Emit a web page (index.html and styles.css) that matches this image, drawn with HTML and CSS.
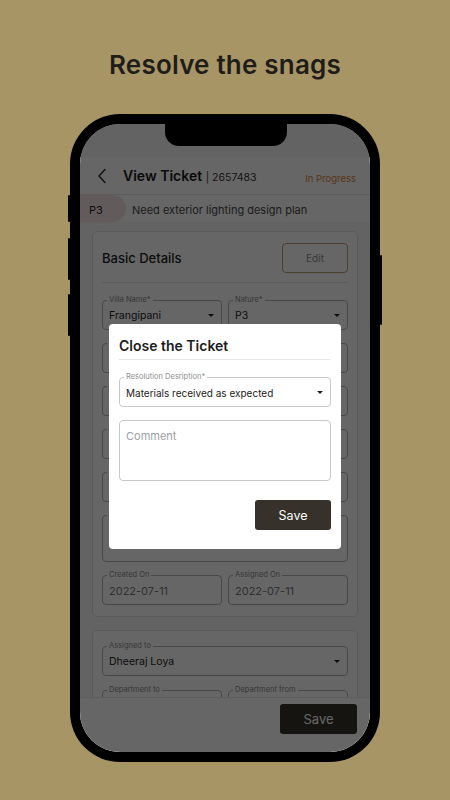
FILE: index.html
```html
<!DOCTYPE html>
<html lang="en">
<head>
<meta charset="utf-8">
<title>Resolve the snags</title>
<link rel="stylesheet" href="styles.css">
</head>
<body>
<main class="page">
  <h1 class="headline">Resolve the snags</h1>
  <div class="phone">
    <span class="side-btn side-l1"></span>
    <span class="side-btn side-l2"></span>
    <span class="side-btn side-l3"></span>
    <span class="side-btn side-r1"></span>
    <div class="screen">
      <div class="notch"></div>
      <header class="topbar">
        <svg class="back" width="10" height="16" viewBox="0 0 10 16"><path d="M8 1.5 L2 8 L8 14.5" fill="none" stroke="#2a2a2a" stroke-width="1.4" stroke-linecap="round" stroke-linejoin="round"/></svg>
        <h2 class="title">View Ticket <span class="ticket-id">| 2657483</span></h2>
        <span class="status">In Progress</span>
      </header>
      <div class="subject">
        <span class="prio">P3</span>
        <span class="subject-text">Need exterior lighting design plan</span>
      </div>

      <section class="card">
        <div class="card-head">
          <h3 class="card-title">Basic Details</h3>
          <button class="edit-btn">Edit</button>
        </div>
        <div class="fields">
          <div class="row">
            <div class="field"><span class="field-label">Villa Name*</span><span class="value">Frangipani</span><span class="caret"></span></div>
            <div class="field"><span class="field-label">Nature*</span><span class="value">P3</span><span class="caret"></span></div>
          </div>
          <div class="field"><span class="field-label">Category*</span><span class="value">Villa Exterior</span><span class="caret"></span></div>
          <div class="field"><span class="field-label">Sub Category*</span><span class="value">Outdoor Lighting</span><span class="caret"></span></div>
          <div class="field"><span class="field-label">Location*</span><span class="value">Garden Area</span><span class="caret"></span></div>
          <div class="field"><span class="field-label">Raised By</span><span class="value"></span></div>
          <div class="field field-tall"><span class="field-label">Description</span><span class="value"></span></div>
          <div class="row">
            <div class="field field-muted"><span class="field-label">Created On</span><span class="value">2022-07-11</span></div>
            <div class="field field-muted"><span class="field-label">Assigned On</span><span class="value">2022-07-11</span></div>
          </div>
        </div>
      </section>

      <section class="card card-assign">
        <div class="fields fields-tight">
          <div class="field"><span class="field-label">Assigned to</span><span class="value">Dheeraj Loya</span><span class="caret"></span></div>
          <div class="row">
            <div class="field"><span class="field-label">Department to</span><span class="value"></span></div>
            <div class="field"><span class="field-label">Department from</span><span class="value"></span></div>
          </div>
        </div>
      </section>

      <footer class="bottombar">
        <button class="save-btn">Save</button>
      </footer>

      <div class="scrim"></div>

      <div class="modal">
        <h3 class="modal-title">Close the Ticket</h3>
        <div class="field modal-field"><span class="field-label">Resolution Desription*</span><span class="value">Materials received as expected</span><span class="caret"></span></div>
        <div class="comment">Comment</div>
        <div class="modal-actions">
          <button class="modal-save">Save</button>
        </div>
      </div>
    </div>
  </div>
</main>
</body>
</html>
```

FILE: styles.css
```css
* { box-sizing: border-box; }

body {
  margin: 0;
  background: #a89566;
  font-family: Inter, "Noto Sans", "Liberation Sans", sans-serif;
}

.page {
  width: 450px;
  height: 800px;
  display: flex;
  flex-direction: column;
  align-items: center;
  overflow: hidden;
}

.headline {
  margin: 50px 0 0;
  font-size: 26px;
  line-height: 30px;
  font-weight: 600;
  color: #1f1d19;
  letter-spacing: 0.2px;
}

.phone {
  position: relative;
  margin-top: 34px;
  width: 310px;
  height: 648px;
  padding: 10px;
  background: #000;
  border-radius: 50px;
}

.side-btn {
  position: absolute;
  width: 2px;
  background: #000;
  border-radius: 1px;
}
.side-l1 { left: -2px; top: 81px; height: 27px; }
.side-l2 { left: -2px; top: 124px; height: 42px; }
.side-l3 { left: -2px; top: 180px; height: 42px; }
.side-r1 { right: -2px; top: 141px; height: 70px; }

.screen {
  position: relative;
  height: 100%;
  border-radius: 40px;
  overflow: hidden;
  background: #f8f8f8;
  padding-top: 33px;
}

.notch {
  position: absolute;
  top: 0;
  left: 85px;
  width: 122px;
  height: 22px;
  background: #000;
  border-radius: 0 0 14px 14px;
  z-index: 5;
}

.topbar {
  display: flex;
  align-items: center;
  height: 38px;
  padding: 0 14px 0 17px;
  border-bottom: 1px solid #e9e9e9;
  background: #fff;
}

.back { flex: none; }

.title {
  margin: 0 0 0 16px;
  font-size: 14px;
  font-weight: 600;
  color: #1a1a1a;
  white-space: nowrap;
}

.ticket-id {
  font-size: 10.5px;
  font-weight: 400;
  color: #333;
}

.status {
  margin-left: auto;
  padding-top: 5px;
  font-size: 9.5px;
  color: #dc8636;
}

.subject {
  display: flex;
  align-items: center;
  height: 27px;
  padding-top: 2px;
  background: #fff;
}

.prio {
  display: flex;
  align-items: center;
  width: 46px;
  height: 27px;
  margin-top: -2px;
  padding: 2px 0 0 9px;
  background: #f6e3e3;
  border-radius: 0 14px 14px 0;
  font-size: 11px;
  color: #1a1a1a;
}

.subject-text {
  margin-left: 6px;
  font-size: 11px;
  color: #4a4a4a;
}

.card {
  margin: 9px 12px 0;
  background: #fff;
  border: 1px solid #e2e2e2;
  border-radius: 5px;
  padding: 11px 9px 11px;
}

.card-head {
  display: flex;
  align-items: center;
  justify-content: space-between;
  height: 40px;
  padding-bottom: 10px;
  border-bottom: 1px solid #e6e6e6;
}

.card-title {
  margin: 0;
  font-size: 13px;
  font-weight: 500;
  color: #1e1e1e;
}

.edit-btn {
  width: 66px;
  height: 30px;
  background: transparent;
  border: 1px solid #b69f6e;
  border-radius: 4px;
  font-family: inherit;
  font-size: 10px;
  color: #8c8c8c;
}

.fields {
  display: flex;
  flex-direction: column;
  gap: 13px;
  margin-top: 17px;
}

.fields-tight {
  margin-top: 4px;
  gap: 14px;
}

.row {
  display: flex;
  gap: 6px;
}
.row .field { flex: 1; }

.field {
  position: relative;
  display: flex;
  align-items: center;
  height: 30px;
  padding: 1px 7px 0 6px;
  border: 1px solid #b4b4b4;
  border-radius: 4px;
  font-size: 10.5px;
  color: #1e1e1e;
}

.field-tall {
  height: 47px;
  align-items: flex-start;
}

.field-muted { color: #7a7a7a; font-size: 11px; }

.field-label {
  position: absolute;
  top: -6px;
  left: 4px;
  padding: 0 2px;
  background: #fff;
  font-size: 7.5px;
  line-height: 10px;
  color: #8a8a8a;
  white-space: nowrap;
}

.value { white-space: nowrap; }

.caret {
  margin-left: auto;
  width: 0;
  height: 0;
  border-left: 3px solid transparent;
  border-right: 3px solid transparent;
  border-top: 3.5px solid #222;
}

.card-assign {
  margin-top: 13px;
  padding-top: 11px;
}

.bottombar {
  position: absolute;
  left: 0;
  right: 0;
  bottom: 0;
  height: 55px;
  display: flex;
  justify-content: flex-end;
  align-items: flex-start;
  padding: 6px 13px 0;
  background: #fff;
  border-top: 1px solid #ececec;
}

.save-btn {
  width: 77px;
  height: 30px;
  border: none;
  border-radius: 3px;
  background: #36322b;
  color: #fff;
  font-family: inherit;
  font-size: 13px;
}

.scrim {
  position: absolute;
  inset: 0;
  background: rgba(0, 0, 0, 0.6);
  z-index: 3;
}

.modal {
  position: absolute;
  left: 29px;
  top: 200px;
  width: 232px;
  height: 225px;
  padding: 13px 10px 19px;
  background: #fff;
  border-radius: 4px;
  z-index: 4;
}

.modal-title {
  margin: 0;
  padding-bottom: 4px;
  font-size: 14px;
  line-height: 18px;
  font-weight: 600;
  color: #1c1c1c;
  border-bottom: 1px solid #e6e6e6;
}

.modal-field {
  margin-top: 17px;
  border-color: #c9c9c9;
  font-size: 10px;
  color: #222;
}

.modal-field .field-label { color: #8d8d8d; }

.comment {
  margin-top: 13px;
  height: 61px;
  padding: 8px 6px;
  border: 1px solid #c9c9c9;
  border-radius: 4px;
  font-size: 11px;
  color: #9aa0a8;
}

.modal-actions {
  display: flex;
  justify-content: flex-end;
  margin-top: 19px;
}

.modal-save {
  width: 76px;
  height: 30px;
  border: none;
  border-radius: 3px;
  background: #36322b;
  color: #fff;
  font-family: inherit;
  font-size: 12.5px;
}
```
